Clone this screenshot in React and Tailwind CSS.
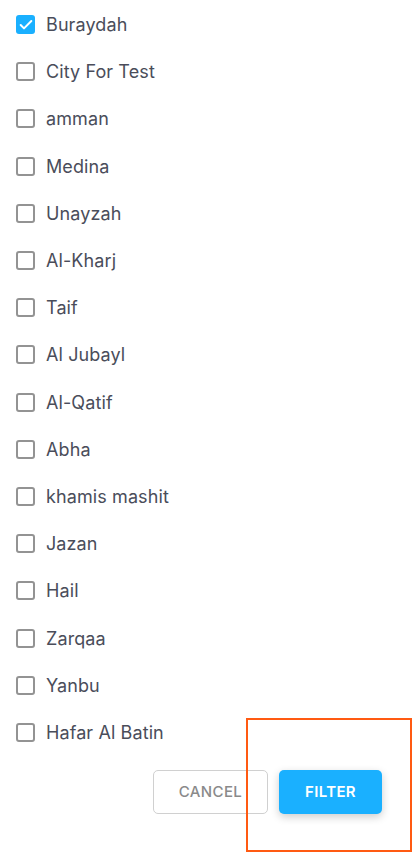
import { Check } from 'lucide-react';

const cities = [
  'Buraydah', 'City For Test', 'amman', 'Medina', 'Unayzah', 'Al-Kharj', 'Taif', 'Al Jubayl',
  'Al-Qatif', 'Abha', 'khamis mashit', 'Jazan', 'Hail', 'Zarqaa', 'Yanbu', 'Hafar Al Batin'
];

export default function App() {
  return (
    <div className="relative w-[414px] h-[854px] bg-white font-['Inter',sans-serif] overflow-hidden">
      <ul className="pt-[1px]">
        {cities.map((c, i) => (
          <li key={c} className="h-[47.2px] flex items-center pl-4 gap-[11px]">
            {i === 0 ? (
              <span className="w-[19px] h-[19px] rounded-[3px] bg-[#1ab0ff] flex items-center justify-center">
                <Check size={16} strokeWidth={3} className="text-white" />
              </span>
            ) : (
              <span className="w-[19px] h-[19px] rounded-[3px] border-2 border-[#939393]" />
            )}
            <span className="text-[18px] tracking-[0.1px] text-[#4a4d5a]">{c}</span>
          </li>
        ))}
      </ul>
      <div className="flex justify-end gap-[11px] pr-[32px] mt-[14px]">
        <button className="w-[115px] h-[44px] rounded-[5px] border border-[#d0d0d0] text-[15px] font-medium tracking-wide text-[#8a8a8a]">
          CANCEL
        </button>
        <button className="w-[103px] h-[44px] rounded-[5px] bg-[#1ab0ff] text-[15px] font-semibold tracking-wide text-white shadow-[0_3px_8px_rgba(0,0,0,0.2)]">
          FILTER
        </button>
      </div>
      <div className="absolute left-[246px] top-[718px] w-[166px] h-[134px] border-2 border-[#ff5a12]" />
    </div>
  );
}
